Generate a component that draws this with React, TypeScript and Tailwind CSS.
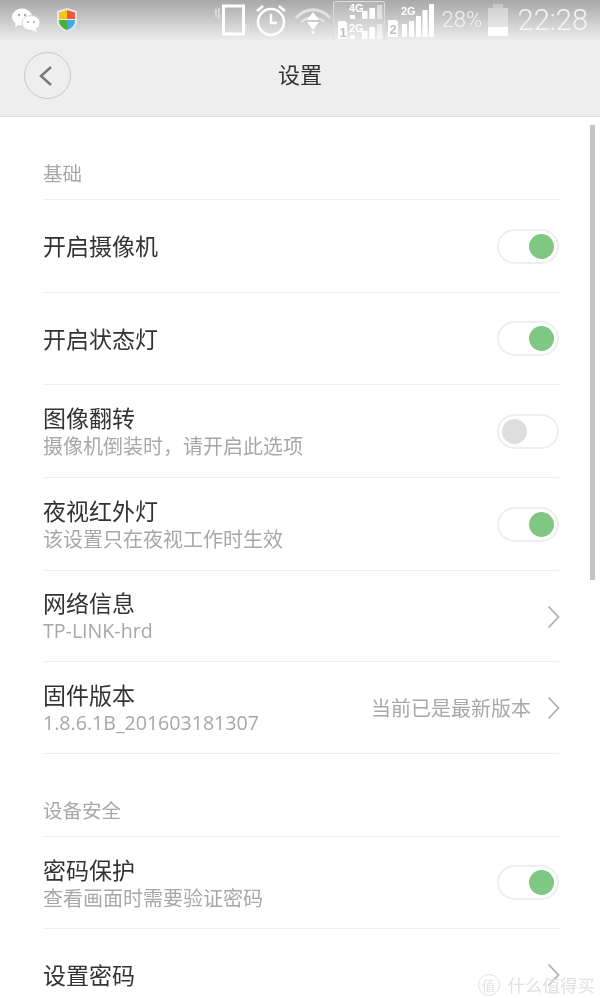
import React from "react";

const font = { fontFamily: '"Noto Sans CJK SC", "Liberation Sans", sans-serif' };
const subFont = { fontFamily: '"Open Sans", "Noto Sans CJK SC", sans-serif' };

function Toggle({ on }: { on: boolean }) {
  return (
    <div className={`flex h-[35px] w-[62px] shrink-0 items-center rounded-full border-2 border-[#eeeeee] bg-white px-[3px] ${on ? "justify-end" : "justify-start"}`}>
      <div className={`h-[25px] w-[25px] rounded-full ${on ? "bg-[#80c783]" : "bg-[#dedede]"}`} />
    </div>
  );
}

function Chevron() {
  return (
    <svg width="13" height="24" viewBox="0 0 13 24" fill="none" stroke="#b0b0b0" strokeWidth="1.800" className="mr-[-1px] mt-[1px] shrink-0">
      <path d="M1.500 1.500l10 10.500-10 10.500" />
    </svg>
  );
}

function Row({ title, sub, right, h }: { title: string; sub?: string; right?: React.ReactNode; h: string }) {
  return (
    <div className={`flex items-center justify-between border-b border-[#eeeeee] ${h}`}>
      <div className={`flex flex-col ${sub ? "" : "pb-[2px]"}`}>
        <div className="text-[23px] leading-[28px] text-[#333333]">{title}</div>
        {sub && <div className="mt-[2px] text-[20px] leading-[26px] text-[#a8a8a8]">{sub}</div>}
      </div>
      {right}
    </div>
  );
}

function LatinRow({ title, sub, right, h }: { title: string; sub: string; right?: React.ReactNode; h: string }) {
  return (
    <div className={`flex items-center justify-between border-b border-[#eeeeee] ${h}`}>
      <div className="flex flex-col">
        <div className="text-[23px] leading-[28px] text-[#333333]">{title}</div>
        <div className="mt-[2px] text-[19.600px] leading-[26px] text-[#a8a8a8]" style={subFont}>{sub}</div>
      </div>
      {right}
    </div>
  );
}

function Section({ title, h }: { title: string; h: string }) {
  return (
    <div className={`flex items-end border-b border-[#eeeeee] pb-[14px] text-[19.500px] leading-[24px] text-[#a8a8a8] ${h}`}>{title}</div>
  );
}

function StatusBar() {
  const sim = { fontFamily: '"Liberation Sans", sans-serif', fontWeight: 700 };
  return (
    <div className="flex h-[40px] items-center justify-between bg-gradient-to-b from-[#a8a8a8] to-[#ececec] pl-[11px] pr-[12px]">
      <div className="flex items-center gap-[15px]">
        <svg width="30" height="26" viewBox="0 0 30 26" fill="white">
          <ellipse cx="11" cy="10" rx="10" ry="8.500" />
          <path d="M5 15l-1 5 6-3z" />
          <ellipse cx="20" cy="16" rx="9" ry="7.500" stroke="#d8d8d8" strokeWidth="1" />
          <path d="M24 21l2 4-6-2z" />
          <circle cx="8" cy="8" r="1.200" fill="#aaa" />
          <circle cx="14" cy="8" r="1.200" fill="#aaa" />
          <circle cx="17" cy="15" r="1" fill="#aaa" />
          <circle cx="23" cy="15" r="1" fill="#aaa" />
        </svg>
        <svg width="22" height="26" viewBox="0 0 22 26">
          <path d="M11 1l10 3v10c0 6-5 9-10 11C6 23 1 20 1 14V4z" fill="#e8e8e8" />
          <path d="M11 3L3 5.500V12h8z" fill="#f5c518" />
          <path d="M11 3l8 2.500V12h-8z" fill="#ee5a3a" />
          <path d="M3 13h8v10c-4-1.500-8-4-8-10z" fill="#4caf3c" />
          <path d="M19 13h-8v10c4-1.500 8-4 8-10z" fill="#3fa9f0" />
        </svg>
      </div>
      <div className="flex items-center">
        <svg width="34" height="32" viewBox="0 0 34 32" fill="none" stroke="white" className="mr-[5px] shrink-0">
          <rect x="8.500" y="2" width="20" height="28" strokeWidth="3" />
          <path d="M1 5v8M4 4v11M31 20v9M33.500 22v7" stroke="#e2e2e2" strokeWidth="1.500" />
        </svg>
        <svg width="34" height="34" viewBox="0 0 34 34" fill="none" stroke="white" strokeWidth="2.500" className="mr-[6px] shrink-0">
          <circle cx="17" cy="19" r="13" />
          <path d="M17 11v9h6M3 8l6-5M31 8l-6-5" />
        </svg>
        <svg width="38" height="28" viewBox="0 0 38 28" fill="none" className="mr-[1px] shrink-0">
          <path d="M2 12c10-11 24-11 34 0" stroke="#e2e2e2" strokeWidth="3" />
          <path d="M7 16c7-6 17-6 24 0" stroke="#e6e6e6" strokeWidth="2" />
          <path d="M19 6l6 8H13zM19 24l-6-8h12z" fill="white" />
          <circle cx="19" cy="26.500" r="1.500" fill="white" />
        </svg>
        <svg width="52" height="40" viewBox="0 0 52 40" className="mr-[2px] mt-[1px] shrink-0" style={sim}>
          <rect x="0.500" y="0.500" width="51" height="39" rx="2" fill="white" fillOpacity="0.1" stroke="#dcdcdc" />
          <text x="16" y="11" fontSize="11" fill="white">4G</text>
          <rect x="17" y="14" width="5" height="4" fill="white" />
          <rect x="29" y="10" width="5.500" height="8" fill="white" />
          <rect x="36.500" y="7" width="5.500" height="11" fill="white" />
          <rect x="44" y="4" width="5" height="14" fill="white" fillOpacity="0.5" />
          <path d="M5 20h7l2 2v16H5z" fill="white" />
          <text x="6.500" y="36" fontSize="13" fill="#c0c0c0">1</text>
          <text x="16" y="31" fontSize="11" fill="white">2G</text>
          <rect x="17" y="34" width="5" height="4" fill="white" />
          <rect x="29" y="30" width="5.500" height="8" fill="white" />
          <rect x="36.500" y="26" width="5.500" height="12" fill="white" />
          <rect x="44" y="23" width="5" height="15" fill="white" fillOpacity="0.5" />
        </svg>
        <svg width="48" height="34" viewBox="0 0 48 34" className="mr-[7px] shrink-0" style={sim}>
          <path d="M1 17h8l2 2v15H1z" fill="white" />
          <text x="2.500" y="31" fontSize="13" fill="#c0c0c0">2</text>
          <text x="14" y="12" fontSize="11" fill="white">2G</text>
          <rect x="15" y="21" width="5" height="13" fill="white" />
          <rect x="22" y="18" width="5" height="16" fill="white" />
          <rect x="29" y="13" width="5" height="21" fill="white" />
          <rect x="35.500" y="7" width="5" height="27" fill="white" />
          <rect x="42" y="1" width="5" height="33" fill="white" />
        </svg>
        <span className="mr-[6px] w-[40px] text-[22px] leading-[24px] text-[#f2f2f2]" style={{ fontFamily: "Roboto, sans-serif", fontWeight: 300 }}>28%</span>
        <div className="mr-[10px] flex h-[32px] w-[20px] flex-col items-center">
          <div className="h-[4px] w-[10px] bg-white/30" />
          <div className="flex h-[28px] w-[20px] flex-col justify-end bg-white/40">
            <div className="h-[9px] bg-white" />
          </div>
        </div>
        <span className="text-[29px] leading-[30px] text-[#f4f4f4]" style={{ fontFamily: "Roboto, sans-serif", fontWeight: 300 }}>22:28</span>
      </div>
    </div>
  );
}

export default function App() {
  const on = <Toggle on />;
  return (
    <div className="relative h-[998px] w-[600px] overflow-hidden bg-white blur-[0.4px]" style={font}>
      <StatusBar />
      <div className="relative flex h-[77px] items-center justify-center border-b border-[#dddddd] bg-[#eeeeee]">
        <div className="absolute left-[24px] top-[12px] flex h-[47px] w-[47px] items-center justify-center rounded-full border border-[#c8c8c8]">
          <svg width="16" height="24" viewBox="0 0 16 24" fill="none" stroke="#7a7a7a" strokeWidth="2.500" className="mr-[3px]">
            <path d="M13 3L3 12l10 9" />
          </svg>
        </div>
        <span className="mt-[-10px] text-[22px] leading-[30px] text-[#333333]">设置</span>
      </div>
      <div className="pl-[43px] pr-[41px]">
        <Section title="基础" h="h-[83px]" />
        <Row title="开启摄像机" right={on} h="h-[93px]" />
        <Row title="开启状态灯" right={on} h="h-[92px]" />
        <Row title="图像翻转" sub="摄像机倒装时，请开启此选项" right={<Toggle on={false} />} h="h-[93px]" />
        <Row title="夜视红外灯" sub="该设置只在夜视工作时生效" right={on} h="h-[93px]" />
        <LatinRow title="网络信息" sub="TP-LINK-hrd" right={<Chevron />} h="h-[91px]" />
        <LatinRow
          title="固件版本"
          sub="1.8.6.1B_201603181307"
          h="h-[92px]"
          right={
            <div className="flex items-center gap-[16px]">
              <span className="text-[20px] text-[#a8a8a8]">当前已是最新版本</span>
              <Chevron />
            </div>
          }
        />
        <Section title="设备安全" h="h-[83px]" />
        <Row title="密码保护" sub="查看画面时需要验证密码" right={on} h="h-[92px]" />
        <Row title="设置密码" right={<Chevron />} h="h-[92px]" />
      </div>
      <div className="absolute right-[5px] top-[125px] h-[455px] w-[5px] bg-[#c4c4c4]" />
      <div className="absolute bottom-[1px] right-[5px] flex items-center gap-[8px] text-[17.500px] leading-[24px] text-[#e2e2e2]">
        <span className="flex h-[22px] w-[22px] items-center justify-center rounded-full border border-[#e4e4e4] text-[13px]">值</span>
        <span>什么值得买</span>
      </div>
    </div>
  );
}
